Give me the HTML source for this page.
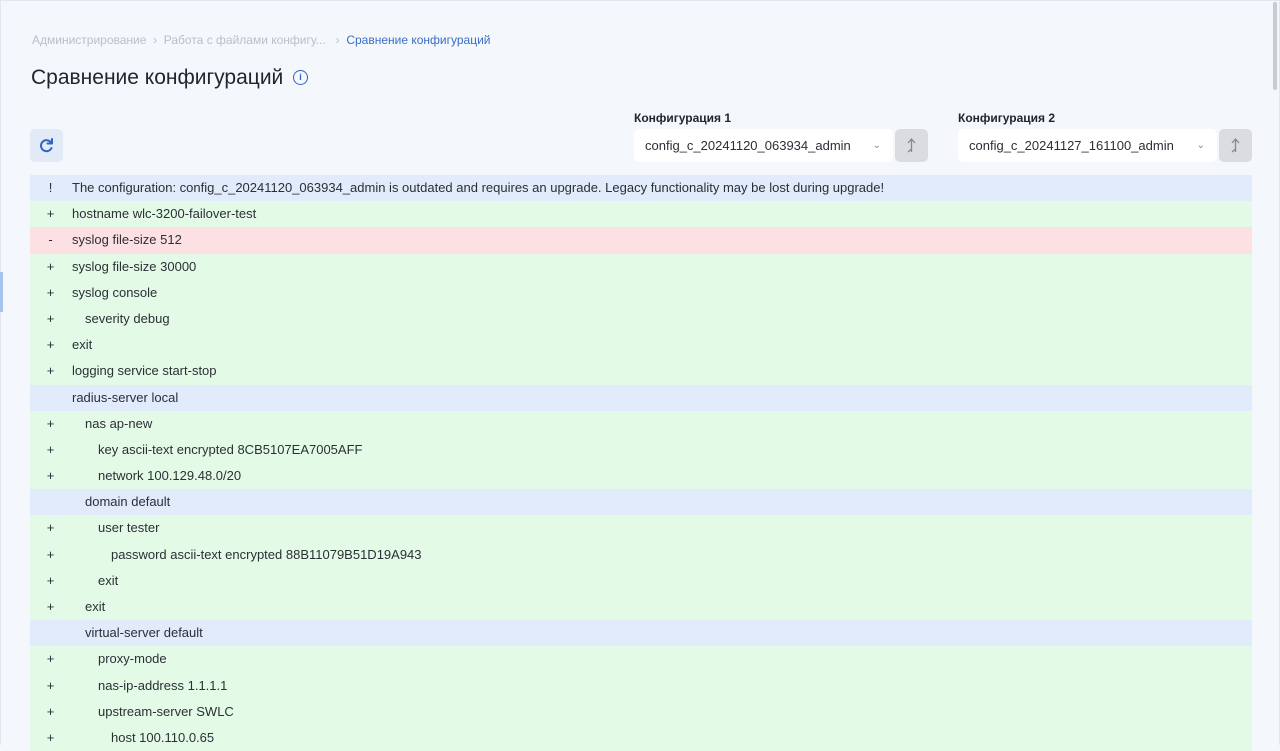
<!DOCTYPE html>
<html><head><meta charset="utf-8"><style>
body{margin:0;width:1280px;height:746px;overflow:hidden;background:#f4f7fc;font-family:"Liberation Sans",sans-serif;color:#2b2f36;position:relative}
.frame{position:absolute;left:0;top:0;width:1278px;height:744px;border:1px solid #e3e6ec;border-bottom:none}
.bc{position:absolute;left:32px;top:33px;font-size:12px;color:#b9bfc9}
.bc b{font-weight:normal;color:#3a6fc4}
h1{position:absolute;left:31px;top:66px;margin:0;font-size:21px;font-weight:normal;color:#22262c}
.info{position:absolute;left:293px;top:70px;width:15px;height:15px;border:1.5px solid #2f64c2;border-radius:50%;box-sizing:border-box;color:#2f64c2;font-size:9px;text-align:center;line-height:12px;font-weight:bold}
.ref{position:absolute;left:30px;top:129px;width:33px;height:33px;background:#e2eaf7;border-radius:5px}
.lbl{position:absolute;top:111px;font-size:12px;font-weight:bold;color:#22262c}
.sel{position:absolute;top:129px;width:259px;height:33px;background:#fff;border-radius:5px;box-sizing:border-box;padding-left:11px;font-size:13px;line-height:33px;color:#2b2f36}
.sel i{position:absolute;right:12px;top:0;font-style:normal;color:#888;font-size:10px}
.btn{position:absolute;top:129px;width:33px;height:33px;background:#dadcdf;border-radius:5px}
.rows{position:absolute;left:30px;top:175px;width:1222px}
.r{height:26.2px;line-height:25px;font-size:13px;position:relative;white-space:nowrap}
.r span{position:absolute;left:16px;width:9px;text-align:center}
.r em{font-style:normal;position:absolute}
.g{background:#e3fbe6}.x{background:#fde0e3}.b{background:#e1ebfb}
.scroll{position:absolute;right:3px;top:2px;width:4px;height:88px;background:#c8cbd0;border-radius:2px}
.mark{position:absolute;left:0;top:272px;width:3px;height:40px;background:#a7c3ef}
</style></head><body>
<div class="frame"></div>
<div class="scroll"></div><div class="mark"></div>
<div class="bc">Администрирование &nbsp;›&nbsp; Работа с файлами конфигу... &nbsp;&nbsp;›&nbsp; <b>Сравнение конфигураций</b></div>
<h1>Сравнение конфигураций</h1><div class="info">i</div>
<div class="ref"><svg width="33" height="33" viewBox="0 0 33 33"><path d="M21 13.5A5.5 5.5 0 1 0 21.5 19" fill="none" stroke="#2f64c2" stroke-width="2" stroke-linecap="round"/><path d="M22 10v4.5h-4.5" fill="none" stroke="#2f64c2" stroke-width="2" stroke-linecap="round" stroke-linejoin="round"/></svg></div>
<div class="lbl" style="left:634px">Конфигурация 1</div>
<div class="lbl" style="left:958px">Конфигурация 2</div>
<div class="sel" style="left:634px">config_c_20241120_063934_admin<i>⌄</i></div>
<div class="btn" style="left:895px"><svg width="33" height="33"><path d="M16.5 10v13M13 14l3.5-4 3.5 4M13 23l3.5-3" fill="none" stroke="#888" stroke-width="1.3"/></svg></div>
<div class="sel" style="left:958px">config_c_20241127_161100_admin<i>⌄</i></div>
<div class="btn" style="left:1219px"><svg width="33" height="33"><path d="M16.5 10v13M13 14l3.5-4 3.5 4M13 23l3.5-3" fill="none" stroke="#888" stroke-width="1.3"/></svg></div>
<div class="rows">
<div class="r b"><span>!</span><em style="left:42px">The configuration: config_c_20241120_063934_admin is outdated and requires an upgrade. Legacy functionality may be lost during upgrade!</em></div>
<div class="r g"><span>+</span><em style="left:42px">hostname wlc-3200-failover-test</em></div>
<div class="r x"><span>-</span><em style="left:42px">syslog file-size 512</em></div>
<div class="r g"><span>+</span><em style="left:42px">syslog file-size 30000</em></div>
<div class="r g"><span>+</span><em style="left:42px">syslog console</em></div>
<div class="r g"><span>+</span><em style="left:55px">severity debug</em></div>
<div class="r g"><span>+</span><em style="left:42px">exit</em></div>
<div class="r g"><span>+</span><em style="left:42px">logging service start-stop</em></div>
<div class="r b"><em style="left:42px">radius-server local</em></div>
<div class="r g"><span>+</span><em style="left:55px">nas ap-new</em></div>
<div class="r g"><span>+</span><em style="left:68px">key ascii-text encrypted 8CB5107EA7005AFF</em></div>
<div class="r g"><span>+</span><em style="left:68px">network 100.129.48.0/20</em></div>
<div class="r b"><em style="left:55px">domain default</em></div>
<div class="r g"><span>+</span><em style="left:68px">user tester</em></div>
<div class="r g"><span>+</span><em style="left:81px">password ascii-text encrypted 88B11079B51D19A943</em></div>
<div class="r g"><span>+</span><em style="left:68px">exit</em></div>
<div class="r g"><span>+</span><em style="left:55px">exit</em></div>
<div class="r b"><em style="left:55px">virtual-server default</em></div>
<div class="r g"><span>+</span><em style="left:68px">proxy-mode</em></div>
<div class="r g"><span>+</span><em style="left:68px">nas-ip-address 1.1.1.1</em></div>
<div class="r g"><span>+</span><em style="left:68px">upstream-server SWLC</em></div>
<div class="r g"><span>+</span><em style="left:81px">host 100.110.0.65</em></div>
</div>
</body></html>
